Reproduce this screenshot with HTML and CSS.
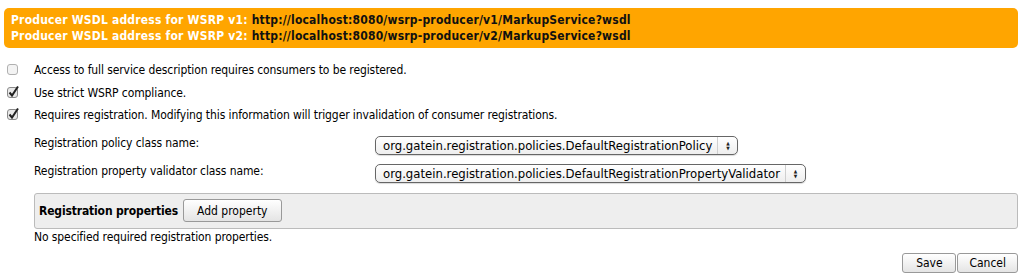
FILE: index.html
```html
<!DOCTYPE html>
<html lang="en">
<head>
    <meta charset="UTF-8">
    <title>WSRP Producer Configuration</title>
    <link rel="stylesheet" href="styles.css">
</head>
<body>
    <div class="producer-info">
        <div>Producer WSDL address for WSRP v1: <span class="wsdl-url">http://localhost:8080/wsrp-producer/v1/MarkupService?wsdl</span></div>
        <div>Producer WSDL address for WSRP v2: <span class="wsdl-url">http://localhost:8080/wsrp-producer/v2/MarkupService?wsdl</span></div>
    </div>

    <div class="options">
        <label class="option">
            <svg class="check" width="14" height="14" viewBox="0 0 14 14"><rect x="1.5" y="2.5" width="10" height="10" rx="2.5" fill="#f3f3f3" stroke="#b0b0b0"/></svg>
            Access to full service description requires consumers to be registered.
        </label>
        <label class="option">
            <svg class="check" width="14" height="14" viewBox="0 0 14 14"><rect x="1.5" y="2.5" width="10" height="10" rx="2.5" fill="#e8e8e8" stroke="#8a8a8a"/><path d="M3.5 7.5 L6 10.5 L12 1.5" fill="none" stroke="#222" stroke-width="2"/></svg>
            Use strict WSRP compliance.
        </label>
        <label class="option">
            <svg class="check" width="14" height="14" viewBox="0 0 14 14"><rect x="1.5" y="2.5" width="10" height="10" rx="2.5" fill="#e8e8e8" stroke="#8a8a8a"/><path d="M3.5 7.5 L6 10.5 L12 1.5" fill="none" stroke="#222" stroke-width="2"/></svg>
            Requires registration. Modifying this information will trigger invalidation of consumer registrations.
        </label>
    </div>

    <div class="registration">
        <div class="field">
            <span class="field-label">Registration policy class name:</span>
            <div class="select">
                <span class="select-text">org.gatein.registration.policies.DefaultRegistrationPolicy</span>
                <span class="select-arrows">&#9650;<br>&#9660;</span>
            </div>
        </div>
        <div class="field">
            <span class="field-label">Registration property validator class name:</span>
            <div class="select">
                <span class="select-text">org.gatein.registration.policies.DefaultRegistrationPropertyValidator</span>
                <span class="select-arrows">&#9650;<br>&#9660;</span>
            </div>
        </div>

        <div class="properties-bar">
            <strong>Registration properties</strong>
            <button class="btn">Add property</button>
        </div>
        <p class="no-props">No specified required registration properties.</p>
    </div>

    <div class="actions">
        <button class="btn">Save</button>
        <button class="btn">Cancel</button>
    </div>
</body>
</html>
```

FILE: styles.css
```css
body {
    margin: 0;
    font-family: "DejaVu Sans Condensed", "DejaVu Sans", sans-serif;
    font-size: 12px;
    letter-spacing: -0.1px;
    color: #000;
    background: #fff;
}

.producer-info {
    margin: 8px 6px 0 4px;
    padding: 4px 7px;
    background-color: #ffa500;
    border-radius: 5px;
    color: #fff;
    font-weight: bold;
    line-height: 16px;
    letter-spacing: 0.2px;
}

.wsdl-url {
    color: #111;
}

.options {
    margin-top: 11px;
    padding-left: 6px;
}

.option {
    display: flex;
    align-items: center;
    height: 22.5px;
}

.check {
    margin-right: 14px;
    margin-top: -2px;
}

.registration {
    padding-left: 34px;
    padding-right: 6px;
}

.field {
    display: flex;
    align-items: center;
    height: 28px;
}

.field:first-child {
    margin-top: 5px;
}

.field-label {
    width: 341px;
    margin-top: -5px;
}

.select {
    display: flex;
    align-items: center;
    height: 17px;
    border: 1px solid #666;
    border-radius: 5px;
    background: linear-gradient(#ffffff, #eeeeee);
    box-shadow: 0 1px 1px rgba(0, 0, 0, 0.15);
}

.select-text {
    padding: 0 5px 0 7px;
    border-right: 1px solid #cfcfcf;
    font-size: 13px;
    letter-spacing: 0;
    line-height: 17px;
}

.select-arrows {
    width: 19px;
    text-align: center;
    font-size: 5px;
    line-height: 5px;
    color: #222;
}

.properties-bar {
    display: flex;
    align-items: center;
    gap: 5px;
    height: 34px;
    margin-top: 5px;
    padding: 0 4px;
    background-color: #eee;
    border: 1px solid #bbb;
    border-radius: 3px;
    letter-spacing: -0.15px;
}

.btn {
    font-family: inherit;
    font-size: 12px;
    letter-spacing: 0;
    height: 23px;
    padding: 0 13px;
    border: 1px solid #999;
    border-radius: 3px;
    background: linear-gradient(#ffffff, #e4e4e4);
    color: #000;
}

.no-props {
    margin: 1px 0 0 0;
}

.actions {
    display: flex;
    justify-content: flex-end;
    gap: 1px;
    margin-top: 9px;
    padding-right: 6px;
}

.actions .btn {
    height: 20px;
    min-width: 54px;
    padding: 0 11px;
}
```
